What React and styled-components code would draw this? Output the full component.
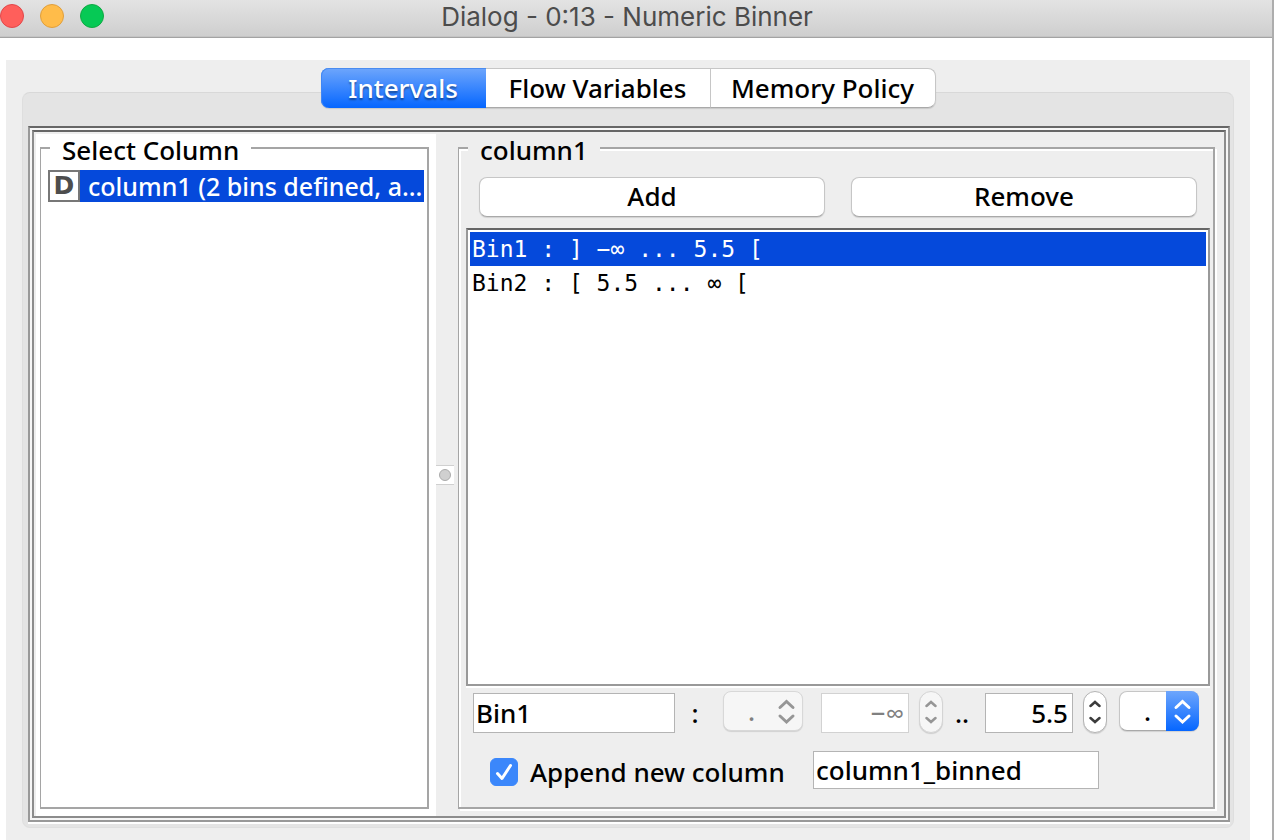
import React, { useState } from "react";
import styled, { createGlobalStyle, css } from "styled-components";

const GlobalStyle = createGlobalStyle`
  *, *::before, *::after { box-sizing: border-box; }
  body { margin: 0; background: #fff; }
  body, button, input, select {
    font-family: "Noto Sans", "Open Sans", sans-serif;
    font-size: 26px;
    font-weight: 500;
    line-height: 32px;
    color: #000;
  }
`;

const Window = styled.div`
  display: flex;
  flex-direction: column;
  min-height: 100vh;
  background: #fff;
  border-right: 2px solid #adadad;
`;

const TitleBar = styled.header`
  display: flex;
  align-items: flex-start;
  height: 38px;
  background: linear-gradient(#e3e3e3, #cecece);
  border-bottom: 1px solid #a3a3a3;
  box-shadow: inset 0 -1px #c4c4c4;
`;

const Lights = styled.div`
  flex: 1;
  display: flex;
  gap: 16px;
  padding-top: 4px;
`;

const Light = styled.button`
  width: 24px;
  height: 24px;
  padding: 0;
  border: 1px solid ${(p) => p.$edge};
  border-radius: 50%;
  background: ${(p) => p.$fill};
`;

const Title = styled.h1`
  margin: 0;
  padding-right: 18px;
  font-family: Inter, Roboto, sans-serif;
  font-size: 26px;
  font-weight: 400;
  line-height: 34px;
  color: #4c4c4c;
`;

const Spacer = styled.div`
  flex: 1;
`;

const Content = styled.main`
  flex: 1;
  display: flex;
  flex-direction: column;
  margin: 22px 22px 0 6px;
  padding: 8px 16px 12px;
  background: #eee;
`;

const TabList = styled.div`
  position: relative;
  z-index: 1;
  align-self: center;
  display: flex;
  height: 40px;
  border-radius: 8px;
  box-shadow: 0 1px 1px rgba(0, 0, 0, 0.12);
`;

const Tab = styled.button`
  width: ${(p) => (p.$selected ? 165 : 225)}px;
  padding: 0;
  border: 1px solid #c6c6c6;
  border-bottom-color: #a9a9a9;
  border-left-width: 0;
  background: #fff;
  &:first-child {
    border-radius: 8px 0 0 8px;
  }
  &:last-child {
    border-radius: 0 8px 8px 0;
  }
  ${(p) =>
    p.$selected &&
    css`
      color: #fff;
      text-shadow: 0 2px 2px rgba(0, 0, 0, 0.4);
      background: linear-gradient(#6ea6fc, #0566ff);
      border: 0;
      box-shadow: inset 0 1px #4a8cf0, inset 1px 0 #3f86f5;
    `}
`;

const TabPanel = styled.section`
  flex: 1;
  display: flex;
  margin-top: -16px;
  padding: 33px 3px 5px 5px;
  background: #e4e4e4;
  border: 1px solid #d8d8d8;
  border-left-color: #dedede;
  border-right-color: #dedede;
  border-bottom-color: #dfdfdf;
  border-radius: 8px;
`;

const sunken = css`
  border: 2px solid #999;
  border-top-color: #666;
`;

const OuterFrame = styled.div`
  flex: 1;
  display: flex;
  padding: 2px;
  background: #f6f6f6;
  box-shadow: 0 2px #fff;
  ${sunken}
`;

const SplitPane = styled.div`
  flex: 1;
  display: grid;
  grid-template-columns: 400px 18px minmax(0, 1fr);
  padding: 2px 0 0 2px;
  background: #eee;
  ${sunken}
  border-color: #666 #8c8c8c #8c8c8c;
`;

const Pane = styled.div`
  display: flex;
  min-width: 0;
  padding: 0 ${(p) => (p.$white ? 7 : 9)}px 7px 4px;
  background: ${(p) => (p.$white ? "#fff" : "#eee")};
`;

const Group = styled.fieldset`
  flex: 1;
  display: flex;
  flex-direction: column;
  min-width: 0;
  margin: 0;
  padding: ${(p) => (p.$raised ? "15px 3px 14px 7px" : "8px 3px 14px 7px")};
  border: 2px solid #a5a5a5;
  border-left-width: 1px;
  ${(p) => p.$raised && "box-shadow: inset 2px 2px #fff, 2px 2px #fff;"}
`;

const Legend = styled.legend`
  height: 28px;
  margin-left: 2px;
  padding: 0 12px;
  line-height: 32px;
  background: ${(p) => (p.$white ? "#fff" : "#eee")};
`;

const ColumnItem = styled.button`
  display: flex;
  height: 32px;
  padding: 0;
  border: 0;
  text-align: left;
  background: none;
`;

const TypeBadge = styled.span`
  flex: none;
  width: 32px;
  height: 32px;
  border: 2px solid #777;
  background: #fff;
  font-family: "DejaVu Sans", sans-serif;
  font-size: 25px;
  font-weight: 700;
  line-height: 28px;
  text-align: center;
  color: #4d4d4d;
`;

const ColumnName = styled.span`
  flex: 1;
  min-width: 0;
  padding-left: 8px;
  overflow: hidden;
  white-space: nowrap;
  font-size: 25px;
  color: #fff;
  background: #0549db;
`;

const Splitter = styled.div`
  align-self: center;
  display: flex;
  align-items: center;
  justify-content: center;
  height: 20px;
  background: #fff;
  border: solid #d0d0d0;
  border-width: 1px 0;
`;

const Grip = styled.span`
  width: 12px;
  height: 12px;
  border: 1px solid #ababab;
  border-radius: 50%;
  background: #d0d0d0;
`;

const ButtonRow = styled.div`
  display: grid;
  grid-template-columns: 1fr 1fr;
  gap: 26px;
  padding: 0 13px;
`;

const PushButton = styled.button`
  height: 40px;
  padding: 0 0 2px;
  border: 1px solid #c6c6c6;
  border-bottom-color: #a9a9a9;
  border-radius: 8px;
  background: #fff;
  box-shadow: 0 1px 1px rgba(0, 0, 0, 0.12);
`;

const BinList = styled.ul`
  flex: 1;
  margin: 11px 0 5px;
  padding: 2px;
  list-style: none;
  background: #fff;
  box-shadow: 0 2px #fff;
  ${sunken}
`;

const Bin = styled.li`
  height: 34px;
  padding-left: 2px;
  font-family: "DejaVu Sans Mono", monospace;
  font-size: 23px;
  line-height: 34px;
  white-space: pre;
  color: ${(p) => (p.$selected ? "#fff" : "#000")};
  background: ${(p) => (p.$selected ? "#0549db" : "#fff")};
`;

const EditRow = styled.div`
  display: flex;
  align-items: flex-start;
  padding-left: 7px;
`;

const TextInput = styled.input`
  width: ${(p) => p.$width}px;
  height: ${(p) => p.$height || 40}px;
  margin-top: ${(p) => (p.$height ? 0 : 2)}px;
  padding: 0 4px 0 2px;
  border: 1px solid #b4b4b4;
  border-radius: 0;
  background: #fff;
  text-align: ${(p) => (p.$right ? "right" : "left")};
  &:disabled {
    color: #808080;
    border-color: #d2d2d2;
  }
`;

const Mark = styled.span`
  width: ${(p) => p.$width}px;
  padding-right: ${(p) => p.$after || 0}px;
  text-align: center;
  line-height: 44px;
`;

const SelectBox = styled.span`
  position: relative;
  width: 80px;
  height: 40px;
  margin-right: ${(p) => p.$gap || 0}px;
`;

const Select = styled.select`
  appearance: none;
  width: 100%;
  height: 100%;
  padding: 0 0 0 24px;
  border: 1px solid #c6c6c6;
  border-bottom-color: #a9a9a9;
  border-radius: 8px;
  background: #fff;
  box-shadow: 0 1px 1px rgba(0, 0, 0, 0.12);
  &:disabled {
    color: #808080;
    opacity: 1;
    background: #f6f6f6;
    border-color: #d8d8d8;
  }
`;

const SelectCap = styled.span`
  position: absolute;
  top: 0;
  right: 0;
  display: flex;
  align-items: center;
  justify-content: center;
  width: 33px;
  height: 40px;
  border-radius: 0 8px 8px 0;
  color: ${(p) => (p.$disabled ? "#969696" : "#fff")};
  background: ${(p) => (p.$disabled ? "none" : "linear-gradient(#6ea6fc, #0566ff)")};
  pointer-events: none;
`;

const Stepper = styled.span`
  display: flex;
  flex-direction: column;
  width: 24px;
  height: 42px;
  margin: 0 0 0 10px;
  overflow: hidden;
  border: 1px solid ${(p) => (p.$disabled ? "#d4d4d4" : "#b4b4b4")};
  border-radius: 12px;
  background: ${(p) => (p.$disabled ? "#f6f6f6" : "#fff")};
  box-shadow: 0 1px 1px rgba(0, 0, 0, 0.14);
`;

const Step = styled.button`
  flex: 1;
  display: flex;
  align-items: center;
  justify-content: center;
  padding: ${(p) => (p.$up ? "4px 0 0" : "0 0 4px")};
  border: 0;
  background: none;
  color: #3c3c3c;
  &:disabled {
    color: #969696;
  }
`;

const AppendRow = styled.div`
  display: flex;
  align-items: flex-start;
  margin-top: 16px;
  padding-left: 24px;
`;

const CheckLabel = styled.label`
  display: flex;
  align-items: center;
  gap: 12px;
  width: 323px;
  height: 42px;
  white-space: nowrap;
`;

const CheckWrap = styled.span`
  position: relative;
  width: 28px;
  height: 28px;
`;

const Checkbox = styled.input`
  appearance: none;
  display: block;
  width: 28px;
  height: 28px;
  margin: 0;
  border: 1px solid #b4b4b4;
  border-radius: 6px;
  background: #fff;
  &:checked {
    border-color: #3b87fb;
    background: #3b87fb;
  }
`;

const Tick = styled.svg`
  position: absolute;
  inset: 0;
  pointer-events: none;
`;

const Chevrons = () => (
  <svg width="20" height="28" viewBox="0 0 20 28" fill="none" stroke="currentColor" strokeWidth="3" strokeLinecap="round" strokeLinejoin="miter">
    <path d="M3 10.500 L9.500 4.500 L16 10.500" />
    <path d="M3 19 L9.500 25 L16 19" />
  </svg>
);

const StepArrow = ({ up }) => (
  <svg width="12" height="8" viewBox="0 0 12 8" fill="none" stroke="currentColor" strokeWidth="2.5" strokeLinecap="round">
    <path d={up ? "M1.500 6 L6 2 L10.500 6" : "M1.500 2 L6 6 L10.500 2"} />
  </svg>
);

const SpinnerButtons = ({ label, disabled, onStep }) => (
  <Stepper $disabled={disabled}>
    <Step $up type="button" disabled={disabled} aria-label={`Increase ${label}`} onClick={() => onStep(1)}>
      <StepArrow up />
    </Step>
    <Step type="button" disabled={disabled} aria-label={`Decrease ${label}`} onClick={() => onStep(-1)}>
      <StepArrow />
    </Step>
  </Stepper>
);

const BracketSelect = ({ label, disabled, gap }) => (
  <SelectBox $gap={gap}>
    <Select aria-label={label} disabled={disabled}>
      <option>.</option>
    </Select>
    <SelectCap $disabled={disabled}>
      <Chevrons />
    </SelectCap>
  </SelectBox>
);

const tabs = ["Intervals", "Flow Variables", "Memory Policy"];
const bins = ["Bin1 : ] −∞ ... 5.5 [", "Bin2 : [ 5.5 ... ∞ ["];

export default function App() {
  const [selected, setSelected] = useState(0);
  const [upper, setUpper] = useState("5.5");
  const [append, setAppend] = useState(true);

  return (
    <>
      <GlobalStyle />
      <Window>
        <TitleBar>
          <Lights>
            <Light aria-label="Close" $fill="#ff5f5b" $edge="#e2474a" />
            <Light aria-label="Minimize" $fill="#ffbc4a" $edge="#e09f3c" />
            <Light aria-label="Zoom" $fill="#06c955" $edge="#0fa942" />
          </Lights>
          <Title>Dialog - 0:13 - Numeric Binner</Title>
          <Spacer />
        </TitleBar>
        <Content>
          <TabList role="tablist">
            {tabs.map((name, i) => (
              <Tab key={name} type="button" role="tab" aria-selected={i === 0} $selected={i === 0}>
                {name}
              </Tab>
            ))}
          </TabList>
          <TabPanel role="tabpanel">
            <OuterFrame>
              <SplitPane>
                <Pane $white>
                  <Group>
                    <Legend $white>Select Column</Legend>
                    <ColumnItem type="button">
                      <TypeBadge>D</TypeBadge>
                      <ColumnName>column1 (2 bins defined, a...</ColumnName>
                    </ColumnItem>
                  </Group>
                </Pane>
                <Splitter>
                  <Grip />
                </Splitter>
                <Pane>
                  <Group $raised>
                    <Legend>column1</Legend>
                    <ButtonRow>
                      <PushButton type="button">Add</PushButton>
                      <PushButton type="button">Remove</PushButton>
                    </ButtonRow>
                    <BinList>
                      {bins.map((bin, i) => (
                        <Bin key={bin} $selected={i === selected} onClick={() => setSelected(i)}>
                          {bin}
                        </Bin>
                      ))}
                    </BinList>
                    <EditRow>
                      <TextInput aria-label="Bin name" $width={202} defaultValue="Bin1" />
                      <Mark $width={48} $after={8}>:</Mark>
                      <BracketSelect label="Left bracket" disabled gap={18} />
                      <TextInput aria-label="Lower bound" $width={88} $right disabled defaultValue="−∞" />
                      <SpinnerButtons label="lower bound" disabled onStep={() => {}} />
                      <Mark $width={42} $after={4}>..</Mark>
                      <TextInput
                        aria-label="Upper bound"
                        $width={88}
                        $right
                        value={upper}
                        onChange={(e) => setUpper(e.target.value)}
                      />
                      <SpinnerButtons label="upper bound" onStep={(d) => setUpper(String(Number(upper) + d))} />
                      <Mark $width={12} />
                      <BracketSelect label="Right bracket" />
                    </EditRow>
                    <AppendRow>
                      <CheckLabel>
                        <CheckWrap>
                          <Checkbox type="checkbox" checked={append} onChange={(e) => setAppend(e.target.checked)} />
                          {append && (
                            <Tick width="28" height="28" viewBox="0 0 28 28" fill="none" stroke="#fff" strokeWidth="3" strokeLinecap="round" strokeLinejoin="round">
                              <path d="M7.500 15.500 L12 20.500 L20.500 7.500" />
                            </Tick>
                          )}
                        </CheckWrap>
                        Append new column
                      </CheckLabel>
                      <TextInput aria-label="New column name" $width={286} $height={38} defaultValue="column1_binned" />
                    </AppendRow>
                  </Group>
                </Pane>
              </SplitPane>
            </OuterFrame>
          </TabPanel>
        </Content>
      </Window>
    </>
  );
}
